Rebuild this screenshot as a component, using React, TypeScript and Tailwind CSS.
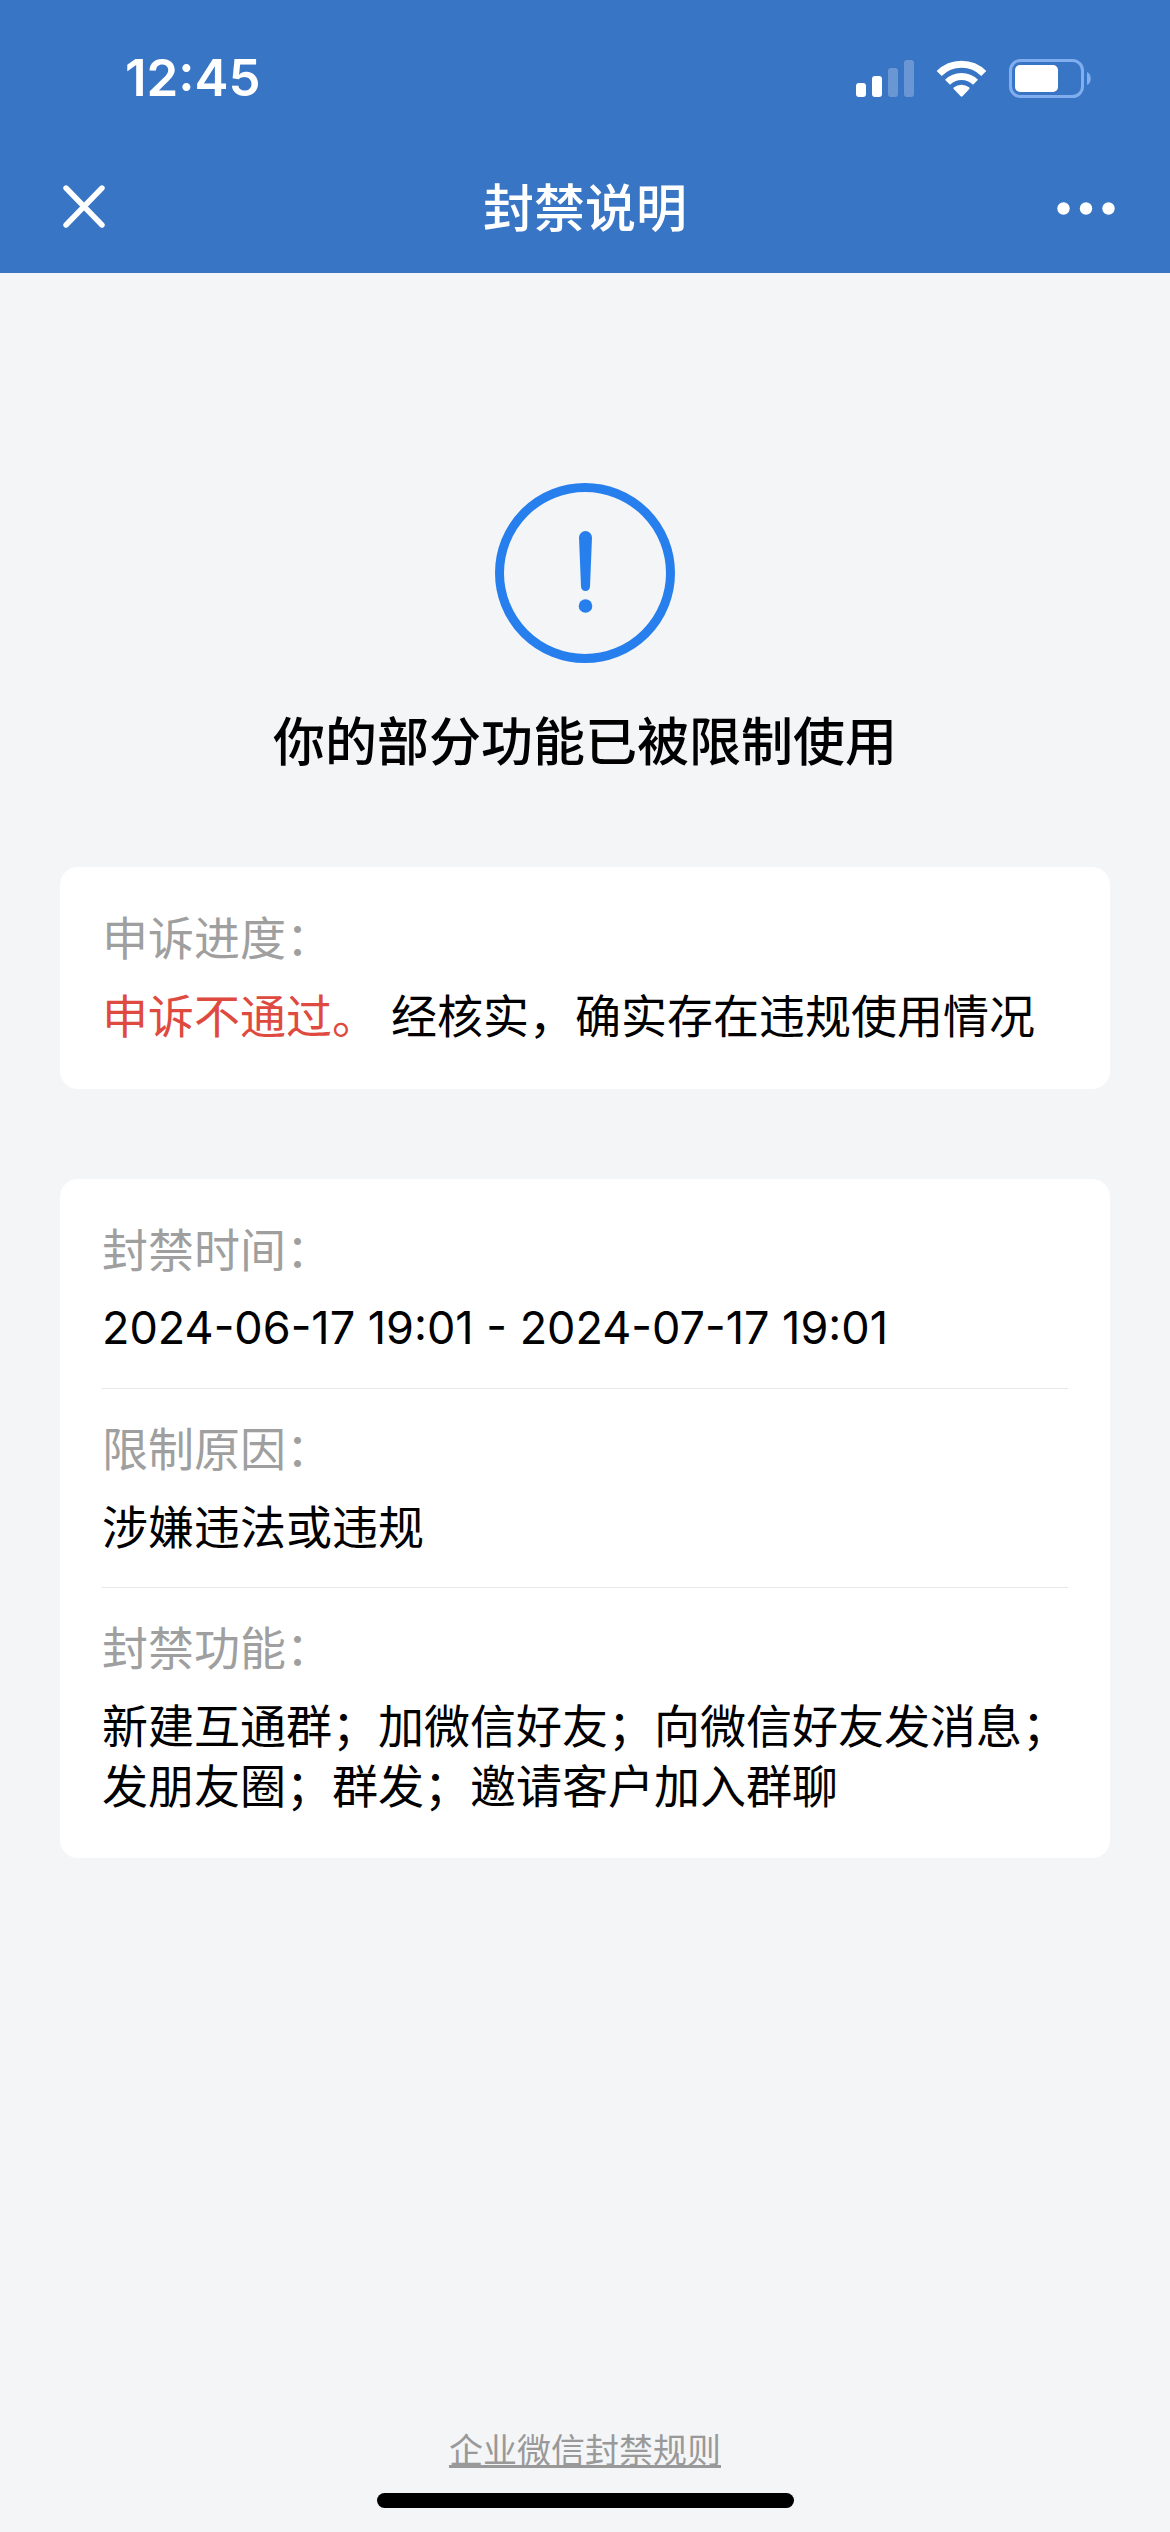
import React from 'react';

const restrictions = [
  { label: '封禁时间：', value: '2024-06-17 19:01 - 2024-07-17 19:01', size: 'text-[45px]' },
  { label: '限制原因：', value: '涉嫌违法或违规', size: 'text-[46px]' },
  { label: '封禁功能：', value: '新建互通群；加微信好友；向微信好友发消息；发朋友圈；群发；邀请客户加入群聊', size: 'text-[46px]' },
];

const SignalIcon = () => (
  <svg width="58" height="37" viewBox="0 0 58 37" fill="#fff" aria-hidden="true">
    <rect x="0" y="23" width="10" height="14" rx="3" />
    <rect x="16" y="16" width="10" height="21" rx="3" />
    <rect x="32" y="8" width="10" height="29" rx="3" opacity="0.25" />
    <rect x="48" y="0" width="10" height="37" rx="3" opacity="0.25" />
  </svg>
);

const WifiIcon = () => (
  <svg width="51" height="37" viewBox="0 0 51 37" fill="none" aria-hidden="true">
    <path d="M3.2 13.5a31.5 31.5 0 0 1 44.6 0" stroke="#fff" strokeWidth="7.2" />
    <path d="M11.5 22.3a20 20 0 0 1 28 0" stroke="#fff" strokeWidth="7" />
    <path d="M17.9 29.2c-.6-.6-.6-1.4.1-1.9a12.2 12.2 0 0 1 15 0c.7.5.7 1.3.1 1.9l-6.6 7c-.5.6-1.3.6-1.8 0z" fill="#fff" />
  </svg>
);

const BatteryIcon = () => (
  <svg width="82" height="39" viewBox="0 0 82 39" fill="none" aria-hidden="true">
    <rect x="1.5" y="1.5" width="72" height="36" rx="10" stroke="#81aeef" strokeWidth="3" />
    <rect x="6" y="6" width="43" height="27" rx="5" fill="#fff" />
    <path d="M78 13c5 1.5 5 11.5 0 13z" fill="#81aeef" />
  </svg>
);

const CloseIcon = () => (
  <svg width="42" height="43" viewBox="0 0 42 43" fill="none" aria-hidden="true">
    <path d="M3 3l36 37M39 3L3 40" stroke="#fff" strokeWidth="5.4" strokeLinecap="round" />
  </svg>
);

const MoreIcon = () => (
  <svg width="58" height="13" viewBox="0 0 58 13" fill="#fff" aria-hidden="true">
    <circle cx="6.5" cy="6.5" r="6.2" />
    <circle cx="29" cy="6.5" r="6.2" />
    <circle cx="51.5" cy="6.5" r="6.2" />
  </svg>
);

const AlertIcon = () => (
  <svg width="180" height="180" viewBox="0 0 180 180" fill="none" aria-hidden="true">
    <circle cx="90" cy="90" r="85.5" stroke="#277fee" strokeWidth="9" />
    <path d="M84 54.5a6.5 6.5 0 0 1 13 0l-2 49a4.5 4.5 0 0 1-9 0z" fill="#277fee" />
    <circle cx="90.5" cy="123" r="6.8" fill="#277fee" />
  </svg>
);

const App = () => {
  return (
    <div className="min-h-screen flex flex-col bg-[#f3f5f7] text-black font-['Inter','Noto_Sans_CJK_SC',sans-serif]" lang="zh-CN">
      <header className="bg-[#3875c5] text-white">
        <div className="h-36 pt-3 pl-[125px] pr-[79px] flex items-center justify-between">
          <span className="text-[51px] leading-[60px] font-semibold">12:45</span>
          <div className="flex items-center">
            <SignalIcon />
            <span className="ml-[22px]"><WifiIcon /></span>
            <span className="ml-[22px]"><BatteryIcon /></span>
          </div>
        </div>
        <div className="h-[129px] px-[55px] grid grid-cols-[1fr_auto_1fr] items-center">
          <button type="button" aria-label="关闭" className="justify-self-start pl-2 pb-1">
            <CloseIcon />
          </button>
          <h1 className="text-[51px] leading-[60px] font-medium">封禁说明</h1>
          <button type="button" aria-label="更多" className="justify-self-end">
            <MoreIcon />
          </button>
        </div>
      </header>

      <main className="px-[60px] pt-[210px]">
        <div className="flex flex-col items-center">
          <AlertIcon />
          <h2 className="mt-[50px] text-[52px] leading-[60px] font-medium">你的部分功能已被限制使用</h2>
        </div>

        {/* Appeal status */}
        <section className="mt-[94px] bg-white rounded-[18px] px-[42px] pt-[41px] pb-[43px] text-[46px] leading-[60px]">
          <p className="text-[#9f9f9f]">申诉进度：</p>
          <p className="mt-[18px]">
            <span className="text-[#df4a40]">申诉不通过。</span> 经核实，确实存在违规使用情况
          </p>
        </section>

        {/* Restriction details */}
        <dl className="mt-[90px] bg-white rounded-[18px] px-[42px] pt-[11px] pb-3 text-[46px] leading-[60px] divide-y divide-[#e8e8e8]">
          {restrictions.map((item) => (
            <div key={item.label} className="py-[30px]">
              <dt className="text-[#9f9f9f]">{item.label}</dt>
              <dd className={`mt-[18px] ${item.size}`}>{item.value}</dd>
            </div>
          ))}
        </dl>
      </main>

      <footer className="mt-auto pb-6 flex flex-col items-center">
        <a
          href="#rules"
          className="text-[34px] leading-[40px] text-[#999] underline decoration-[3px] underline-offset-2 [text-decoration-skip-ink:none]"
        >
          企业微信封禁规则
        </a>
        <div className="mt-[22px] h-[15px] w-[417px] rounded-full bg-black" />
      </footer>
    </div>
  );
};

export default App;
